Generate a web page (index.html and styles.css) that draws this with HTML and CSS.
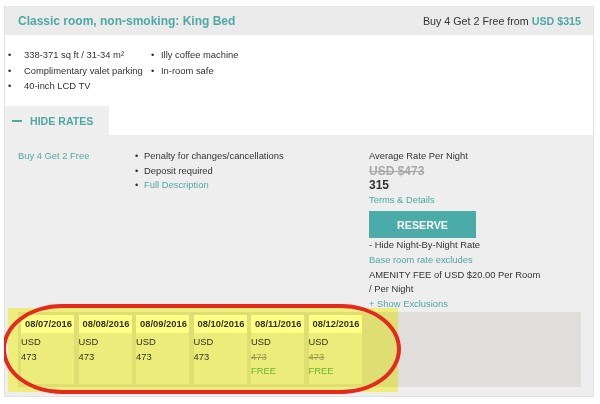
FILE: index.html
```html
<!DOCTYPE html>
<html lang="en">
<head>
    <meta charset="UTF-8">
    <meta name="viewport" content="width=device-width, initial-scale=1.0">
    <title>Classic room, non-smoking: King Bed</title>
    <link rel="stylesheet" href="styles.css">
</head>
<body>
    <div class="room">
        <div class="room-head">
            <h3 class="room-name">Classic room, non-smoking: King Bed</h3>
            <div class="room-from">Buy 4 Get 2 Free from <strong>USD $315</strong></div>
        </div>

        <div class="room-info">
            <ul class="features first">
                <li>338-371 sq ft / 31-34 m²</li>
                <li>Complimentary valet parking</li>
                <li>40-inch LCD TV</li>
            </ul>
            <ul class="features second">
                <li>Illy coffee machine</li>
                <li>In-room safe</li>
            </ul>
        </div>

        <div class="rate-tabs">
            <button class="rate-toggle"><span class="dash"></span>HIDE RATES</button>
        </div>

        <div class="rates">
            <div class="rate-row">
                <a class="link rate-name" href="#">Buy 4 Get 2 Free</a>
                <ul class="policies">
                    <li>Penalty for changes/cancellations</li>
                    <li>Deposit required</li>
                    <li><a class="link" href="#">Full Description</a></li>
                </ul>
                <div class="rate-price">
                    <div>Average Rate Per Night</div>
                    <div class="was">USD $473</div>
                    <div class="now">315</div>
                    <a class="link" href="#">Terms &amp; Details</a>
                    <button class="reserve">RESERVE</button>
                    <div>- Hide Night-By-Night Rate</div>
                    <a class="link" href="#">Base room rate excludes</a>
                    <div>AMENITY FEE of USD $20.00 Per Room / Per Night</div>
                    <a class="link" href="#">+ Show Exclusions</a>
                </div>
            </div>

            <div class="nights">
                <div class="night">
                    <div class="night-date">08/07/2016</div>
                    <div class="night-body">USD<br>473</div>
                </div>
                <div class="night">
                    <div class="night-date">08/08/2016</div>
                    <div class="night-body">USD<br>473</div>
                </div>
                <div class="night">
                    <div class="night-date">08/09/2016</div>
                    <div class="night-body">USD<br>473</div>
                </div>
                <div class="night">
                    <div class="night-date">08/10/2016</div>
                    <div class="night-body">USD<br>473</div>
                </div>
                <div class="night">
                    <div class="night-date">08/11/2016</div>
                    <div class="night-body">USD<br><s class="struck">473</s><br><span class="free">FREE</span></div>
                </div>
                <div class="night">
                    <div class="night-date">08/12/2016</div>
                    <div class="night-body">USD<br><s class="struck">473</s><br><span class="free">FREE</span></div>
                </div>
            </div>

            <div class="highlight"></div>
            <div class="circle"></div>
        </div>
    </div>
</body>
</html>
```

FILE: styles.css
```css
* {
    box-sizing: border-box;
}

body {
    font-family: "Liberation Sans", Arial, sans-serif;
    font-size: 9.4px;
    color: #333;
    background-color: #fff;
    margin: 6px 0 0 4px;
}

ul {
    list-style: none;
    margin: 0;
    padding: 0;
}

.link {
    color: #4ea9a6;
    text-decoration: none;
}

.room {
    width: 590px;
    border: 1px solid #e2e2e2;
    border-top: none;
}

.room-head {
    height: 29px;
    display: flex;
    align-items: center;
    justify-content: space-between;
    padding: 0 12px 0 13px;
    background-color: #ebebeb;
}

.room-name {
    margin: 0;
    font-size: 12px;
    font-weight: bold;
    color: #4ea9a6;
}

.room-from {
    font-size: 10.7px;
    color: #333;
}

.room-from strong {
    color: #4ea9a6;
}

.room-info {
    display: flex;
    padding: 12px 0 12.5px 3px;
    background-color: #fff;
    line-height: 15.5px;
}

.features li::before {
    content: "•";
    display: inline-block;
}

.features.first {
    width: 143px;
}

.features.first li::before {
    width: 16px;
}

.features.second li::before {
    width: 10px;
}

.rate-tabs {
    display: flex;
    background-color: #fff;
}

.rate-toggle {
    width: 104px;
    height: 29px;
    display: flex;
    align-items: center;
    padding: 0 0 0 7px;
    border: none;
    background-color: #eeeeee;
    font-family: inherit;
    font-size: 10.6px;
    font-weight: bold;
    color: #4ea9a6;
    cursor: pointer;
}

.dash {
    display: inline-block;
    width: 10px;
    height: 2px;
    margin-right: 8px;
    background-color: #4ea9a6;
}

.rates {
    position: relative;
    padding: 14px 12px 9px 13px;
    background-color: #eeeeee;
    line-height: 14.6px;
}

.rate-row {
    display: grid;
    grid-template-columns: 116px 235px 1fr;
}

.rate-name {
    align-self: start;
}

.policies li::before {
    content: "•";
    display: inline-block;
    width: 9px;
    padding-left: 1px;
}

.rate-price {
    display: flex;
    flex-direction: column;
    align-items: flex-start;
    max-width: 175px;
}

.was {
    font-size: 12px;
    font-weight: bold;
    color: #a8a8a8;
    text-decoration: line-through;
}

.now {
    font-size: 12px;
    font-weight: bold;
    color: #333;
}

.reserve {
    width: 107px;
    height: 27px;
    margin-top: 4px;
    border: none;
    background-color: #4aaba8;
    color: #fff;
    font-family: inherit;
    font-size: 10.7px;
    font-weight: bold;
    cursor: pointer;
}

.nights {
    display: flex;
    gap: 4.5px;
    height: 75px;
    margin-top: 1px;
    padding: 3px;
    background-color: #dfdedb;
}

.night {
    width: 53px;
    background-color: #ececec;
}

.night-date {
    height: 18px;
    display: flex;
    align-items: center;
    padding-left: 4px;
    background-color: #fff;
    font-weight: bold;
    white-space: nowrap;
}

.night-body {
    padding-top: 2px;
    line-height: 14.5px;
}

.struck {
    color: #9a9a9a;
}

.free {
    color: #64ba52;
}

.highlight {
    position: absolute;
    left: 3px;
    top: 173px;
    width: 390px;
    height: 84px;
    background-color: #ffff85;
    mix-blend-mode: multiply;
}

.circle {
    position: absolute;
    left: -3px;
    top: 169px;
    width: 399px;
    height: 90px;
    border: 4px solid #e5291c;
    border-radius: 60px / 45px;
}
```
